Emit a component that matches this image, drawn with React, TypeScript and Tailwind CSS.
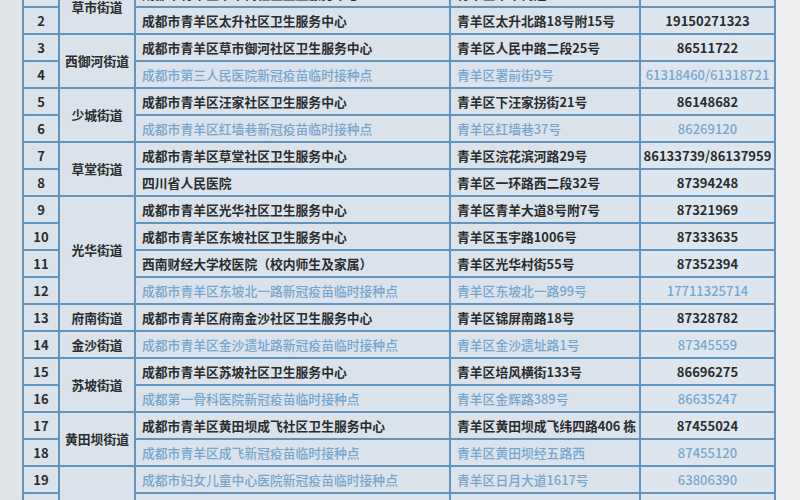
import React from 'react';

type Row = {
  no: number;
  name: string;
  addr: string;
  phone: string;
  blue?: boolean;
};

// street cells, keyed by the row number they start on
const streets: Record<number, { name: string; span: string }> = {
  1: { name: '草市街道', span: 'row-span-2' },
  3: { name: '西御河街道', span: 'row-span-2' },
  5: { name: '少城街道', span: 'row-span-2' },
  7: { name: '草堂街道', span: 'row-span-2' },
  9: { name: '光华街道', span: 'row-span-4' },
  13: { name: '府南街道', span: 'row-span-1' },
  14: { name: '金沙街道', span: 'row-span-1' },
  15: { name: '苏坡街道', span: 'row-span-2' },
  17: { name: '黄田坝街道', span: 'row-span-2' },
  19: { name: '文家街道', span: 'row-span-3' },
};

const rows: Row[] = [
  { no: 1, name: '成都市青羊区草市街社区卫生服务中心', addr: '青羊区草市街道', phone: '86629120' },
  { no: 2, name: '成都市青羊区太升社区卫生服务中心', addr: '青羊区太升北路18号附15号', phone: '19150271323' },
  { no: 3, name: '成都市青羊区草市御河社区卫生服务中心', addr: '青羊区人民中路二段25号', phone: '86511722' },
  { no: 4, name: '成都市第三人民医院新冠疫苗临时接种点', addr: '青羊区署前街9号', phone: '61318460/61318721', blue: true },
  { no: 5, name: '成都市青羊区汪家社区卫生服务中心', addr: '青羊区下汪家拐街21号', phone: '86148682' },
  { no: 6, name: '成都市青羊区红墙巷新冠疫苗临时接种点', addr: '青羊区红墙巷37号', phone: '86269120', blue: true },
  { no: 7, name: '成都市青羊区草堂社区卫生服务中心', addr: '青羊区浣花滨河路29号', phone: '86133739/86137959' },
  { no: 8, name: '四川省人民医院', addr: '青羊区一环路西二段32号', phone: '87394248' },
  { no: 9, name: '成都市青羊区光华社区卫生服务中心', addr: '青羊区青羊大道8号附7号', phone: '87321969' },
  { no: 10, name: '成都市青羊区东坡社区卫生服务中心', addr: '青羊区玉宇路1006号', phone: '87333635' },
  { no: 11, name: '西南财经大学校医院（校内师生及家属）', addr: '青羊区光华村街55号', phone: '87352394' },
  { no: 12, name: '成都市青羊区东坡北一路新冠疫苗临时接种点', addr: '青羊区东坡北一路99号', phone: '17711325714', blue: true },
  { no: 13, name: '成都市青羊区府南金沙社区卫生服务中心', addr: '青羊区锦屏南路18号', phone: '87328782' },
  { no: 14, name: '成都市青羊区金沙遗址路新冠疫苗临时接种点', addr: '青羊区金沙遗址路1号', phone: '87345559', blue: true },
  { no: 15, name: '成都市青羊区苏坡社区卫生服务中心', addr: '青羊区培风横街133号', phone: '86696275' },
  { no: 16, name: '成都第一骨科医院新冠疫苗临时接种点', addr: '青羊区金辉路389号', phone: '86635247', blue: true },
  { no: 17, name: '成都市青羊区黄田坝成飞社区卫生服务中心', addr: '青羊区黄田坝成飞纬四路406 栋', phone: '87455024' },
  { no: 18, name: '成都市青羊区成飞新冠疫苗临时接种点', addr: '青羊区黄田坝经五路西', phone: '87455120', blue: true },
  { no: 19, name: '成都市妇女儿童中心医院新冠疫苗临时接种点', addr: '青羊区日月大道1617号', phone: '63806390', blue: true },
  { no: 20, name: '成都市青羊区文家社区卫生服务中心', addr: '青羊区文家街道', phone: '87531200' },
  { no: 21, name: '成都市青羊区文家新冠疫苗临时接种点', addr: '青羊区文家街道', phone: '87531201', blue: true },
];

const cell = 'bg-[#dae3eb] flex items-center whitespace-nowrap';

export default function App() {
  return (
    <div className="w-[800px] h-[500px] overflow-hidden bg-[linear-gradient(90deg,#e1e4e7_0%,#e8ebee_50%,#eceef0_100%)] font-['Noto_Sans_CJK_SC','Noto_Sans',sans-serif]">
      {/* table: the line colour shows through the 2px gaps */}
      <div className="ml-[22px] mt-[-21px] w-[754px] p-[2px] bg-[#6294bd] grid grid-cols-[34px_74px_313px_188px_133px] auto-rows-[25px] gap-[2px] text-[12.8px] font-semibold text-[#2a2c2e]">
        {rows.map((r) => {
          const street = streets[r.no];
          const txt = r.blue ? 'text-[#76a6cf] font-medium' : 'text-[#2a2c2e]';
          return (
            <React.Fragment key={r.no}>
              <div className={`${cell} justify-center text-[13px]`}>{r.no}</div>
              {street && (
                <div className={`${cell} ${street.span} justify-center`}>{street.name}</div>
              )}
              <div className={`${cell} pl-[6px] ${txt}`}>{r.name}</div>
              <div className={`${cell} pl-[6px] ${txt}`}>{r.addr}</div>
              <div className={`bg-[#dde6ee] flex items-center justify-center whitespace-nowrap text-[13px] ${txt}`}>
                {r.phone}
              </div>
            </React.Fragment>
          );
        })}
      </div>
    </div>
  );
}
